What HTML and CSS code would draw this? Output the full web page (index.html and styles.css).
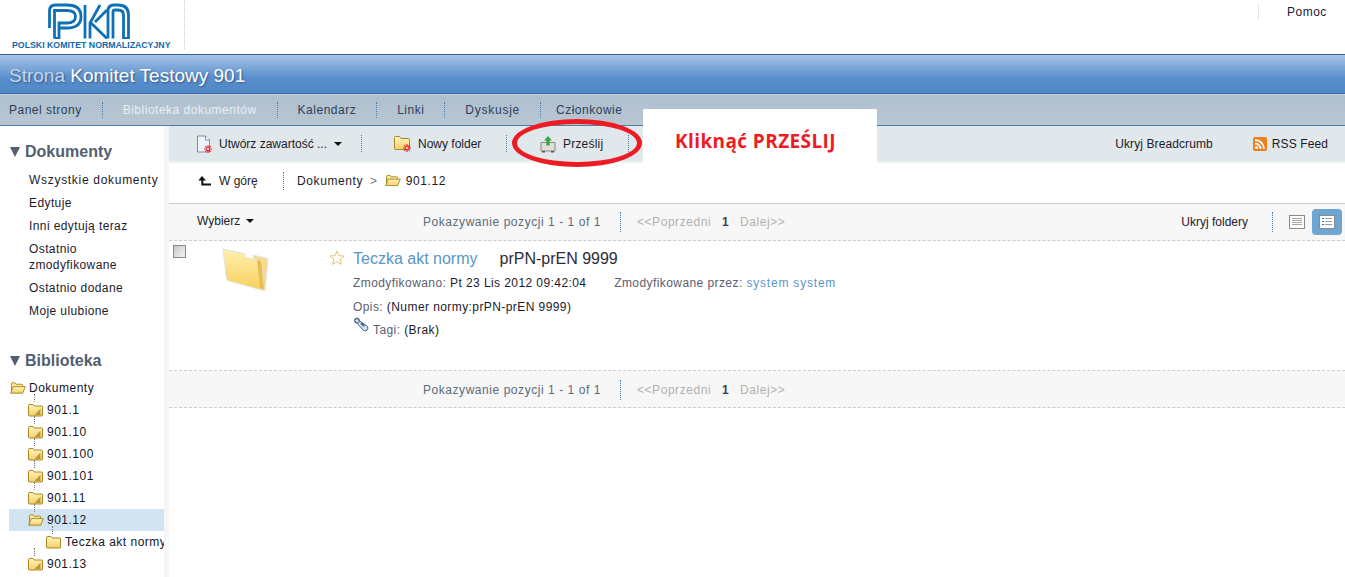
FILE: index.html
```html
<!DOCTYPE html>
<html lang="pl">
<head>
    <meta charset="UTF-8" />
    <meta name="viewport" content="width=device-width, initial-scale=1.0"/>
    <title>Biblioteka dokumentów</title>
    <link rel="stylesheet" href="styles.css">
</head>
<body>
    <svg class="icon-defs" width="0" height="0">
        <defs>
            <linearGradient id="folderFill" x1="0" y1="0" x2="0" y2="1">
                <stop offset="0" stop-color="#fff4bd"/>
                <stop offset="1" stop-color="#f5cf6a"/>
            </linearGradient>
            <symbol id="folder-closed" viewBox="0 0 15 14">
                <path d="M.5 2.500q0-1 1-1h3.500l1.200 1.500h7.300q1 0 1 1v8q0 1-1 1h-12q-1 0-1-1z" fill="url(#folderFill)" stroke="#a98720"/>
                <path d="M12.500 5.500v6.500h-6z" fill="#b99a3a"/>
            </symbol>
            <symbol id="folder-plain" viewBox="0 0 15 14">
                <path d="M.5 2.500q0-1 1-1h3.500l1.200 1.500h7.300q1 0 1 1v8q0 1-1 1h-12q-1 0-1-1z" fill="url(#folderFill)" stroke="#a98720"/>
            </symbol>
            <symbol id="folder-open" viewBox="0 0 17 14">
                <path d="M1.500 12.500v-10q0-1 1-1h3l1 1.500h6q1 0 1 1v1.500" fill="#fbe7a0" stroke="#a98720"/>
                <path d="M.8 12.500l2.500-7h13l-2.800 7z" fill="url(#folderFill)" stroke="#a98720" stroke-linejoin="round"/>
            </symbol>
            <symbol id="burst" viewBox="0 0 8 8">
                <path d="M4 0v8M0 4h8M1.200 1.200l5.600 5.600M6.800 1.200l-5.600 5.600" stroke="#e8202a" stroke-width="1.100"/>
                <circle cx="4" cy="4" r="1" fill="#fff"/>
            </symbol>
        </defs>
    </svg>

    <header class="top-bar">
        <div class="logo">
            <svg class="logo-mark" width="82" height="36" viewBox="0 0 82 36" fill="none" stroke="#0f70b7" stroke-width="2.800">
                <path d="M1.500 25V8Q1.500 2 7.500 2H19Q33 2 33 13.500 33 25 19 25H11"/>
                <path d="M6.500 35.500V7.500H19Q27.500 7.500 27.500 13.500 27.500 20 19 20H11V35.500H6.500"/>
                <path d="M37 35.500V2M42 35.500V20L52 2M42 19L59 35.500M47 19L59 7"/>
                <path d="M60 35.500V8Q60 2 66 2H70Q80.500 2 80.500 12V35.500H75.500V12Q75.500 7 70 7H67Q65 7 65 9V35.500"/>
            </svg>
            <div class="logo-text">POLSKI KOMITET NORMALIZACYJNY</div>
        </div>
        <div class="help-link"><span>Pomoc</span></div>
    </header>

    <div class="site-band">
        <h1 class="site-title"><span class="site-prefix">Strona</span> Komitet Testowy 901</h1>
    </div>

    <nav class="site-nav">
        <a class="nav-item">Panel strony</a>
        <a class="nav-item nav-active">Biblioteka dokumentów</a>
        <a class="nav-item">Kalendarz</a>
        <a class="nav-item">Linki</a>
        <a class="nav-item nav-wide">Dyskusje</a>
        <a class="nav-item nav-last">Członkowie</a>
    </nav>

    <div class="page">
        <aside class="sidebar">
            <h2 class="side-title"><span class="side-arrow"></span>Dokumenty</h2>
            <ul class="side-links">
                <li class="side-wide">Wszystkie dokumenty</li>
                <li>Edytuje</li>
                <li>Inni edytują teraz</li>
                <li>Ostatnio zmodyfikowane</li>
                <li>Ostatnio dodane</li>
                <li>Moje ulubione</li>
            </ul>

            <h2 class="side-title side-title-lib"><span class="side-arrow"></span>Biblioteka</h2>
            <ul class="tree">
                <li class="tree-root"><svg class="tree-icon-open"><use href="#folder-open"/></svg>Dokumenty</li>
                <li class="tree-node"><svg class="tree-icon"><use href="#folder-closed"/></svg>901.1</li>
                <li class="tree-node"><svg class="tree-icon"><use href="#folder-closed"/></svg>901.10</li>
                <li class="tree-node"><svg class="tree-icon"><use href="#folder-closed"/></svg>901.100</li>
                <li class="tree-node"><svg class="tree-icon"><use href="#folder-closed"/></svg>901.101</li>
                <li class="tree-node"><svg class="tree-icon"><use href="#folder-closed"/></svg>901.11</li>
                <li class="tree-node tree-selected"><svg class="tree-icon-open"><use href="#folder-open"/></svg>901.12</li>
                <li class="tree-node tree-child"><svg class="tree-icon"><use href="#folder-plain"/></svg>Teczka akt normy</li>
                <li class="tree-node"><svg class="tree-icon"><use href="#folder-closed"/></svg>901.13</li>
            </ul>
        </aside>

        <main class="content">
            <div class="toolbar">
                <div class="tool tool-create">
                    <svg class="tool-icon" width="17" height="18" viewBox="0 0 17 18">
                        <path d="M1.500 1h8l4 4v12h-12z" fill="#eef2fa" stroke="#7c8fb0"/>
                        <path d="M9.500 1v4h4" fill="#fff" stroke="#7c8fb0"/>
                        <use href="#burst" x="8" y="10" width="8" height="8"/>
                    </svg>
                    <span class="tool-tight">Utwórz zawartość ...</span>
                    <span class="caret"></span>
                </div>
                <div class="tool tool-folder">
                    <svg class="tool-icon" width="18" height="17" viewBox="0 0 18 17">
                        <path d="M.5 2.500q0-1 1-1h4l1.500 2h7.500q1 0 1 1v9q0 1-1 1h-13q-1 0-1-1z" fill="url(#folderFill)" stroke="#a98720"/>
                        <use href="#burst" x="9" y="9" width="8" height="8"/>
                    </svg>
                    <span class="tool-tight">Nowy folder</span>
                </div>
                <div class="tool tool-upload">
                    <svg class="tool-icon" width="16" height="18" viewBox="0 0 16 18">
                        <path d="M1 7.500h14v8.500h-14z" fill="#dedfd9" stroke="#8b8b84"/>
                        <path d="M2 16h3v1.500h-3zM11 16h3v1.500h-3z" fill="#55554f"/>
                        <path d="M8 1l4 4.500h-2.300v5h-3.400v-5h-2.300z" fill="#3fa648"/>
                    </svg>
                    <span>Prześlij</span>
                </div>
                <div class="tool-spacer"></div>
                <span class="tool-hide">Ukryj Breadcrumb</span>
                <span class="tool-rss">
                    <svg class="rss-icon" width="14" height="14" viewBox="0 0 14 14">
                        <rect width="14" height="14" rx="2" fill="#ef7d1d"/>
                        <circle cx="3.500" cy="10.500" r="1.600" fill="#fff"/>
                        <path d="M2 6.500a5.500 5.500 0 0 1 5.500 5.500M2 3a9 9 0 0 1 9 9" fill="none" stroke="#fff" stroke-width="1.800"/>
                    </svg>
                    RSS Feed
                </span>
            </div>

            <div class="crumbs">
                <span class="crumb-up">
                    <svg class="up-icon" width="13" height="10" viewBox="0 0 13 10">
                        <path d="M4 0l4 4.500h-2.700v3h7.700v2h-9.700v-5h-3z" fill="#111"/>
                    </svg>
                    W górę
                </span>
                <span class="crumb-path">
                    <span>Dokumenty</span>
                    <span class="crumb-sep">&gt;</span>
                    <svg class="crumb-folder" width="16" height="13"><use href="#folder-open"/></svg>
                    <span>901.12</span>
                </span>
            </div>

            <div class="list-head">
                <span class="select-menu">Wybierz <span class="caret caret-small"></span></span>
                <div class="pager">
                    <span class="pager-count">Pokazywanie pozycji 1 - 1 of 1</span>
                    <span class="pager-links">&lt;&lt;Poprzedni <b>1</b> Dalej&gt;&gt;</span>
                </div>
                <span class="hide-folders">Ukryj foldery</span>
                <div class="view-switch">
                    <span class="view-btn">
                        <svg width="16" height="14" viewBox="0 0 16 14">
                            <rect x=".5" y=".5" width="15" height="13" fill="#fff" stroke="#8a8a8a"/>
                            <path d="M3 3.500h10M3 5.500h10M3 7.500h10M3 9.500h10" stroke="#a5a5a5"/>
                        </svg>
                    </span>
                    <span class="view-btn view-on">
                        <svg width="16" height="14" viewBox="0 0 16 14">
                            <rect x=".5" y=".5" width="15" height="13" fill="#fff" stroke="#8a8a8a"/>
                            <path d="M6 3.500h7M6 6.500h7M6 9.500h7" stroke="#8fa0b5"/>
                            <path d="M3 3h2v1h-2zM3 6h2v1h-2zM3 9h2v1h-2z" fill="#2f74d0"/>
                        </svg>
                    </span>
                </div>
            </div>

            <div class="doc-row">
                <span class="doc-check"></span>
                <svg class="doc-folder" width="48" height="44" viewBox="0 0 48 44">
                    <defs>
                        <linearGradient id="bigFolder" x1="0" y1="0" x2="0" y2="1">
                            <stop offset="0" stop-color="#fff0ad"/>
                            <stop offset="1" stop-color="#f8cf5e"/>
                        </linearGradient>
                    </defs>
                    <path d="M32 8l13 3q2 .5 2 2l-3 31-6-2z" fill="#f2dc90" stroke="#e6e6e6"/>
                    <path d="M2 2l22 5v3l16 4 3 28q0 2-2 1l-33-9q-2-.5-2.500-2.500z" fill="url(#bigFolder)" stroke="#e2e2d6"/>
                    <path d="M40 14l3 28-4-1-3-28z" fill="#e8bd52"/>
                </svg>
                <div class="doc-info">
                    <div class="doc-title">
                        <svg class="doc-star" width="16" height="15" viewBox="0 0 16 15">
                            <path d="M8 1l2 4.600 5 .5-3.800 3.300 1.100 4.900-4.300-2.600-4.300 2.600 1.100-4.900-3.800-3.300 5-.5z" fill="#fff" stroke="#e6c06e"/>
                        </svg>
                        <a class="doc-link">Teczka akt normy</a>
                        <span class="doc-number">prPN-prEN 9999</span>
                    </div>
                    <div class="doc-meta">
                        <span class="meta-label">Zmodyfikowano:</span> Pt 23 Lis 2012 09:42:04
                        <span class="meta-label meta-by">Zmodyfikowane przez:</span> <a class="meta-link">system system</a>
                    </div>
                    <div class="doc-meta doc-desc"><span class="meta-label">Opis:</span> (Numer normy:prPN-prEN 9999)</div>
                    <div class="doc-meta doc-tags">
                        <svg class="tag-icon" width="16" height="15" viewBox="0 0 16 15">
                            <path d="M1.500 3.500l2-2 11 8q1 2-.5 3.500t-3.500 .5z" fill="#cfdff5" stroke="#4a5f85"/>
                            <circle cx="4" cy="3.500" r="2.500" fill="none" stroke="#4a5f85"/>
                            <path d="M8 6l3 3" stroke="#4a5f85" stroke-width="2"/>
                        </svg>
                        <span class="meta-label">Tagi:</span> (Brak)
                    </div>
                </div>
            </div>

            <div class="list-foot">
                <div class="pager">
                    <span class="pager-count">Pokazywanie pozycji 1 - 1 of 1</span>
                    <span class="pager-links">&lt;&lt;Poprzedni <b>1</b> Dalej&gt;&gt;</span>
                </div>
            </div>
        </main>
    </div>

    <!-- annotation pasted over the screenshot -->
    <div class="note">Kliknąć PRZEŚLIJ</div>
    <div class="note-ring"></div>
</body>
</html>
```

FILE: styles.css
```css
* {
    margin: 0;
    padding: 0;
    box-sizing: border-box;
}

html, body {
    height: 577px;
    overflow: hidden;
}

body {
    position: relative;
    font-family: "Liberation Sans", Arial, sans-serif;
    font-size: 12px;
    color: #1b1b2b;
    background: #fff;
}

ul {
    list-style: none;
}

.icon-defs {
    position: absolute;
}

/* top bar */
.top-bar {
    height: 54px;
    display: flex;
    justify-content: space-between;
}

.logo {
    width: 185px;
    height: 49px;
    border-right: 1px dotted #ccc;
    padding-top: 3px;
    display: flex;
    flex-direction: column;
}

.logo-mark {
    margin-left: 48px;
    flex: none;
}

.logo-text {
    margin: 1px 0 0 12px;
    font-size: 8.750px;
    font-weight: bold;
    line-height: 10px;
    color: #1169ae;
    white-space: nowrap;
}

.help-link {
    width: 87px;
    height: 15px;
    margin-top: 4px;
    padding-left: 28px;
    border-left: 1px dotted #ccc;
    line-height: 16px;
    letter-spacing: 0.5px;
}

/* blue band */
.site-band {
    height: 40px;
    border-top: 1px solid #2f69a3;
    border-bottom: 1px solid #2f69a3;
    background: linear-gradient(#a6c3e6 0%, #5a8fcc 60%, #4f87c7 100%);
}

.site-title {
    font-size: 19px;
    font-weight: normal;
    line-height: 41px;
    padding-left: 9px;
    color: #fff;
    text-shadow: 1px 1px 2px rgba(30, 50, 90, 0.6);
}

.site-prefix {
    color: #c4d7ea;
}

/* navigation */
.site-nav {
    height: 32px;
    display: flex;
    align-items: center;
    border-top: 1px dotted #d8e0e8;
    border-bottom: 1px solid #4f80ad;
    background: linear-gradient(#aebfcf, #b9c6d2);
}

.nav-item {
    padding: 0 20px;
    height: 16px;
    line-height: 16px;
    letter-spacing: 0.5px;
    color: #2c3f5c;
    border-right: 1px dotted #4f80ad;
}

.nav-item:first-child {
    padding-left: 9px;
}

.nav-active {
    color: #e8eff5;
}

.nav-wide {
    letter-spacing: 0.75px;
}

.nav-last {
    padding-left: 15px;
    border-right: 0;
}

/* page */
.page {
    display: flex;
    height: 451px;
}

.sidebar {
    width: 169px;
    flex: none;
    padding-top: 16px;
    border-right: 5px solid #f6f6f6;
    overflow: hidden;
}

.side-title {
    display: flex;
    align-items: center;
    height: 20px;
    padding-left: 10px;
    font-size: 16px;
    color: #535f70;
}

.side-arrow {
    width: 0;
    height: 0;
    margin-right: 5px;
    border-left: 5px solid transparent;
    border-right: 5px solid transparent;
    border-top: 10px solid #535f70;
}

.side-links {
    padding: 7px 0 0 29px;
    letter-spacing: 0.4px;
}

.side-links li {
    padding: 4px 0;
    margin-bottom: -0.500px;
    line-height: 15.500px;
}

.side-links .side-wide {
    letter-spacing: 0.7px;
    white-space: nowrap;
}

.side-title-lib {
    margin-top: 28px;
}

.tree {
    margin-top: 6px;
    letter-spacing: 0.5px;
    color: #14142a;
}

.tree li {
    position: relative;
    display: flex;
    align-items: center;
    height: 22px;
    white-space: nowrap;
}

.tree-root {
    padding-left: 10px;
}

.tree-node {
    margin-left: 9px;
    padding-left: 19px;
}

.tree-node::before {
    content: "";
    position: absolute;
    left: 25px;
    top: -5px;
    height: 8px;
    border-left: 1px dotted #777;
}

.tree-selected {
    background: #d2e4f2;
}

.tree .tree-child {
    padding-left: 37px;
}

.tree-child::before {
    left: 43px;
}

.tree-icon {
    width: 15px;
    height: 14px;
    margin-right: 4px;
    flex: none;
}

.tree-icon-open {
    width: 16px;
    height: 14px;
    margin-right: 3px;
    flex: none;
}

/* content */
.content {
    flex: 1;
    min-width: 0;
}

.toolbar {
    height: 37px;
    display: flex;
    align-items: center;
    border-bottom: 2px solid #eef2f3;
    background: #e1e8eb;
    letter-spacing: 0.3px;
}

.tool {
    display: flex;
    align-items: center;
    height: 17px;
}

.tool-icon {
    margin-right: 6px;
    flex: none;
}

.tool-tight {
    letter-spacing: 0;
}

.tool-create {
    width: 193px;
    padding-left: 27px;
    border-right: 1px dotted #4f80ad;
}

.tool-folder {
    width: 145px;
    padding-left: 32px;
    border-right: 1px dotted #4f80ad;
}

.tool-upload {
    width: 122px;
    padding-left: 33px;
    border-right: 1px dotted #4f80ad;
    letter-spacing: 0.2px;
}

.tool-upload .tool-icon {
    margin-right: 7px;
}

.tool-spacer {
    flex: 1;
}

.tool-hide {
    margin-right: 40px;
    letter-spacing: 0.1px;
}

.tool-rss {
    display: flex;
    align-items: center;
    margin-right: 17px;
    letter-spacing: 0.1px;
}

.rss-icon {
    margin-right: 5px;
}

.caret {
    display: inline-block;
    width: 0;
    height: 0;
    margin-left: 7px;
    border-left: 4px solid transparent;
    border-right: 4px solid transparent;
    border-top: 4px solid #111;
}

.caret-small {
    margin-left: 2px;
    vertical-align: 2px;
}

.crumbs {
    height: 40px;
    display: flex;
    align-items: center;
    padding: 0 0 5px 29px;
}

.crumb-up {
    display: flex;
    align-items: center;
    width: 86px;
    height: 18px;
    border-right: 1px dotted #4f80ad;
    margin-right: 13px;
}

.up-icon {
    margin-right: 8px;
}

.crumb-path {
    display: flex;
    align-items: center;
    letter-spacing: 0.6px;
}

.crumb-sep {
    color: #777;
    margin: 0 7px;
}

.crumb-folder {
    margin-right: 5px;
}

.list-head {
    position: relative;
    height: 38px;
    display: flex;
    align-items: center;
    background: #f7f7f7;
    border-top: 1px solid #ccc;
    border-bottom: 1px dashed #ccc;
    padding-left: 28px;
}

.select-menu {
    width: 226px;
    padding-bottom: 2px;
}

.pager {
    display: flex;
    align-items: center;
    letter-spacing: 0.55px;
    color: #5a6a7c;
}

.pager-count {
    width: 198px;
    height: 20px;
    line-height: 20px;
    border-right: 1px dotted #4f80ad;
    margin-right: 16px;
}

.pager-links {
    color: #b0b0b0;
    white-space: pre;
}

.pager-links b {
    margin: 0 7px;
    color: #34405a;
}

.hide-folders {
    margin-left: auto;
    margin-right: 24px;
}

.view-switch {
    display: flex;
    align-items: center;
    gap: 7px;
    height: 20px;
    padding-left: 16px;
    margin-right: 3px;
    border-left: 1px dotted #4f80ad;
}

.view-btn {
    display: flex;
    align-items: center;
    justify-content: center;
    width: 30px;
    height: 26px;
}

.view-btn:first-child {
    width: 16px;
}

.view-on {
    border-radius: 4px;
    background: #6ea6d3;
}

/* document row */
.doc-row {
    height: 130px;
    display: flex;
    align-items: flex-start;
    border-bottom: 1px dashed #ccc;
}

.doc-check {
    width: 13px;
    height: 13px;
    margin: 4px 0 0 4px;
    border: 1px solid #8a8a8a;
    background: linear-gradient(135deg, #c8c8c8, #f2f2f2);
    flex: none;
}

.doc-folder {
    margin: 6px 0 0 35px;
    flex: none;
}

.doc-info {
    margin-left: 84px;
    padding-top: 8px;
    letter-spacing: 0.42px;
}

.doc-title {
    position: relative;
    height: 20px;
    display: flex;
    align-items: center;
    font-size: 16px;
    letter-spacing: 0;
}

.doc-star {
    position: absolute;
    left: -24px;
    top: 1px;
}

.doc-link {
    color: #5b95c9;
    margin-right: 22px;
}

.doc-number {
    color: #2c2c35;
}

.doc-meta {
    margin-top: 6px;
    line-height: 16px;
}

.meta-label {
    color: #5a6070;
}

.meta-by {
    margin-left: 24px;
}

.meta-link {
    color: #5b95c9;
    letter-spacing: 0.8px;
}

.doc-desc {
    margin-top: 8px;
}

.doc-tags {
    position: relative;
    margin-top: 7px;
    padding-left: 20px;
}

.tag-icon {
    position: absolute;
    left: 0;
    top: -5px;
}

.list-foot {
    height: 37px;
    display: flex;
    align-items: center;
    padding: 1px 0 0 254px;
    background: #f7f7f7;
    border-bottom: 1px dashed #ccc;
}

/* annotation */
.note {
    position: absolute;
    left: 643px;
    top: 109px;
    width: 234px;
    height: 54px;
    padding-left: 32px;
    background: #fff;
    color: #ed1c24;
    font-family: "Open Sans", sans-serif;
    font-size: 19px;
    font-weight: bold;
    letter-spacing: 0.4px;
    line-height: 64px;
    white-space: nowrap;
}

.note-ring {
    position: absolute;
    left: 512px;
    top: 119px;
    width: 130px;
    height: 48px;
    border: 5px solid #ed1c24;
    border-radius: 50%;
}
```
